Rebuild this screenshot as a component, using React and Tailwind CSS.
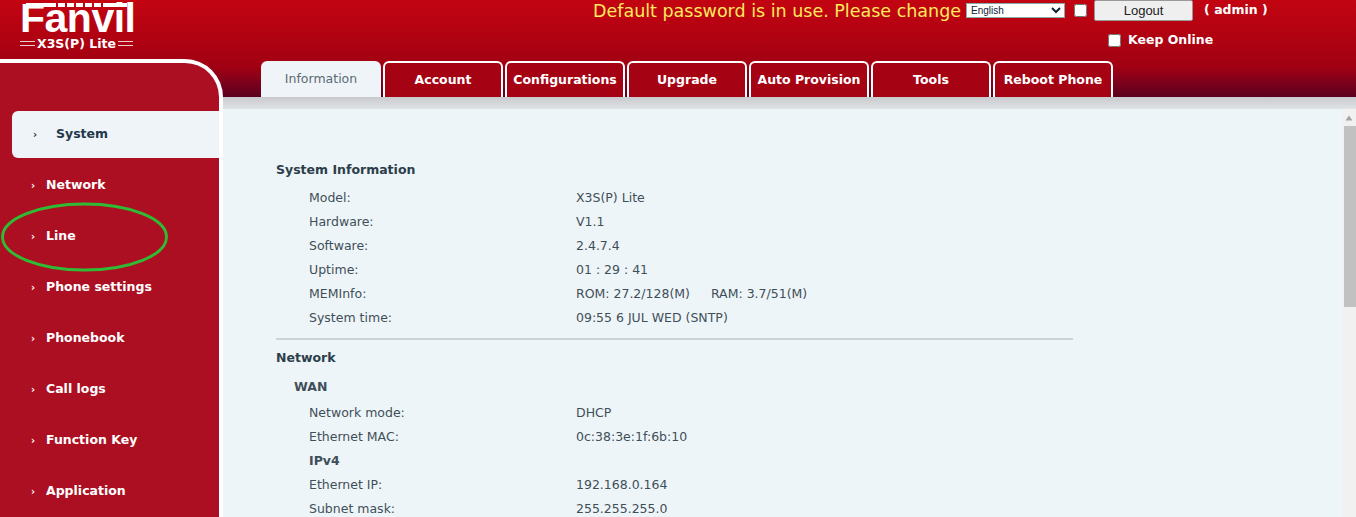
const font = { fontFamily: '"DejaVu Sans", sans-serif' };

const tabs = ["Information", "Account", "Configurations", "Upgrade", "Auto Provision", "Tools", "Reboot Phone"];
const nav = ["System", "Network", "Line", "Phone settings", "Phonebook", "Call logs", "Function Key", "Application"];

function Row({ label, value, children }) {
  return (
    <div className="flex h-6 items-center pl-[33px] text-[#3f4f59]">
      <div className="w-[267px] shrink-0">{label}</div>
      <div>{children || value}</div>
    </div>
  );
}

function Logo() {
  return (
    <div className="w-[261px] shrink-0 pl-5 pt-0 text-white">
      <div className="relative h-[36px] w-[110px]">
        <div className="absolute left-[6px] top-[3px] flex gap-[2px]">
          <span className="h-[4px] w-[30px] bg-white" />
          <span className="h-[4px] w-[7px] bg-white" />
          <span className="h-[4px] w-[7px] bg-white" />
          <span className="h-[4px] w-[7px] bg-white" />
          <span className="h-[4px] w-[7px] bg-white" />
          <span className="h-[4px] w-[7px] bg-white" />
          <span className="h-[4px] w-[24px] bg-white" />
        </div>
        <div className="absolute left-0 top-[-4px] whitespace-nowrap text-[41px] font-bold leading-[44px] tracking-[-0.5px]" style={{ fontFamily: '"Liberation Sans", sans-serif' }}>
          Fanvil
        </div>
      </div>
      <div className="flex w-[110px] items-center gap-[2px] text-[12.5px] font-bold leading-[15px]" style={font}>
        <span className="h-[5px] w-[15px] shrink-0 border-y border-white/80" />
        <span className="whitespace-nowrap">X3S(P) Lite</span>
        <span className="h-[5px] w-[15px] shrink-0 border-y border-white/80" />
      </div>
    </div>
  );
}

export default function App() {
  return (
    <div className="relative h-[517px] w-[1356px] overflow-hidden bg-white text-[12.5px]" style={font}>
      <header className="flex h-[97px] bg-gradient-to-b from-[#c30411] via-[#a00112] via-70% to-[#5c001e]">
        <Logo />
        <div className="flex min-w-0 flex-1 flex-col">
          <div className="flex h-[61px] flex-col">
            <div className="flex items-start">
              <div className="ml-[332px] mt-[-1px] whitespace-nowrap text-[17.5px] leading-[24px] text-[#ffe95c]">Default password is in use. Please change</div>
              <select className="ml-[5px] mt-[3px] h-[15px] w-[99px] border border-[#8aa] bg-white text-[10px] leading-[13px] text-[#123]" style={{ fontFamily: '"Liberation Sans", sans-serif', appearance: "auto" }} defaultValue="English">
                <option>English</option>
              </select>
              <input type="checkbox" className="ml-[9px] mt-[4px] h-[13px] w-[13px]" style={{ appearance: "auto" }} />
              <button className="ml-[7px] h-[21px] w-[99px] rounded-[2px] border border-[#999] bg-[#efefef] text-[13px] text-[#222]" style={{ fontFamily: '"Liberation Sans", sans-serif' }}>Logout</button>
              <div className="ml-[11px] whitespace-nowrap text-[12.5px] font-bold leading-[20px] text-white">( admin )</div>
            </div>
            <div className="ml-[847px] mt-[8px] flex items-center">
              <input type="checkbox" className="h-[13px] w-[13px]" style={{ appearance: "auto" }} />
              <span className="ml-[7px] whitespace-nowrap font-bold text-white">Keep Online</span>
            </div>
          </div>
          <nav className="flex h-[36px] gap-[2px]">
            {tabs.map((t, i) => (
              <div
                key={t}
                className={
                  i === 0
                    ? "flex h-[36px] w-[120px] items-center justify-center rounded-t-[6px] bg-[#eef4f7] text-[#5a6a74]"
                    : "flex h-[36px] w-[120px] items-center justify-center rounded-t-[6px] border-2 border-b-0 border-white bg-[#a50313] font-bold text-white"
                }
              >
                {t}
              </div>
            ))}
          </nav>
        </div>
      </header>

      <div className="flex h-[420px]">
        <aside className="mt-[-38px] h-[458px] w-[223px] shrink-0 rounded-tr-[38px] border-r-4 border-t-4 border-white bg-[#ac0f22] pt-[48px] font-bold text-white">
          {nav.map((n, i) => (
            <div
              key={n}
              className={
                i === 0
                  ? "mb-[4px] ml-3 flex h-[47px] items-center rounded-l-[6px] bg-[#eff4f8] pl-[21px] text-[#24384a]"
                  : "mb-[4px] flex h-[47px] items-center pl-[31px]"
              }
            >
              <span className="w-[15px] text-[10px]">›</span>
              <span className={i === 0 ? "ml-[8px]" : ""}>{n}</span>
            </div>
          ))}
        </aside>
        <main className="flex min-w-0 flex-1 flex-col">
          <div className="h-[12px] shrink-0 bg-gradient-to-b from-[#c9c9cd] to-[#dfe4e6]" />
          <div className="flex min-h-0 flex-1">
            <div className="flex-1 bg-[#eef5f8] pl-[53px] pt-[49px]">
              <div className="w-[797px]">
                <div className="h-6 font-bold leading-6 text-[#2c3e4a]">System Information</div>
                <div className="mt-[4px]">
                  <Row label="Model:" value="X3S(P) Lite" />
                  <Row label="Hardware:" value="V1.1" />
                  <Row label="Software:" value="2.4.7.4" />
                  <Row label="Uptime:" value="01 : 29 : 41" />
                  <Row label="MEMInfo:">
                    <span>ROM: 27.2/128(M)</span>
                    <span className="ml-[21px]">RAM: 3.7/51(M)</span>
                  </Row>
                  <Row label="System time:" value="09:55 6 JUL WED (SNTP)" />
                </div>
                <div className="mt-[8px] h-[2px] bg-[#cfd2d4]" />
                <div className="mt-[6px] h-6 font-bold leading-6 text-[#2c3e4a]">Network</div>
                <div className="mt-[5px] h-6 pl-[18px] font-bold leading-6 text-[#3f4f59]">WAN</div>
                <div className="mt-[2px]">
                  <Row label="Network mode:" value="DHCP" />
                  <Row label="Ethernet MAC:" value="0c:38:3e:1f:6b:10" />
                  <Row label={<b>IPv4</b>} value="" />
                  <Row label="Ethernet IP:" value="192.168.0.164" />
                  <Row label="Subnet mask:" value="255.255.255.0" />
                </div>
              </div>
            </div>
            <div className="flex w-[14px] shrink-0 flex-col items-end bg-[#f1f1f1]">
              <svg width="14" height="17" viewBox="0 0 14 17" className="shrink-0">
                <path d="M3.5 11.5 L7 6.5 L10.5 11.5 Z" fill="#a3a3a3" />
              </svg>
              <div className="h-[181px] w-[12px] bg-[#c1c1c1]" />
            </div>
          </div>
        </main>
      </div>

      <svg width="170" height="72" viewBox="0 0 170 72" className="pointer-events-none absolute left-0 top-[202px]">
        <ellipse cx="84.5" cy="35" rx="82" ry="33" fill="none" stroke="#2fbb33" strokeWidth="3" />
      </svg>
    </div>
  );
}
